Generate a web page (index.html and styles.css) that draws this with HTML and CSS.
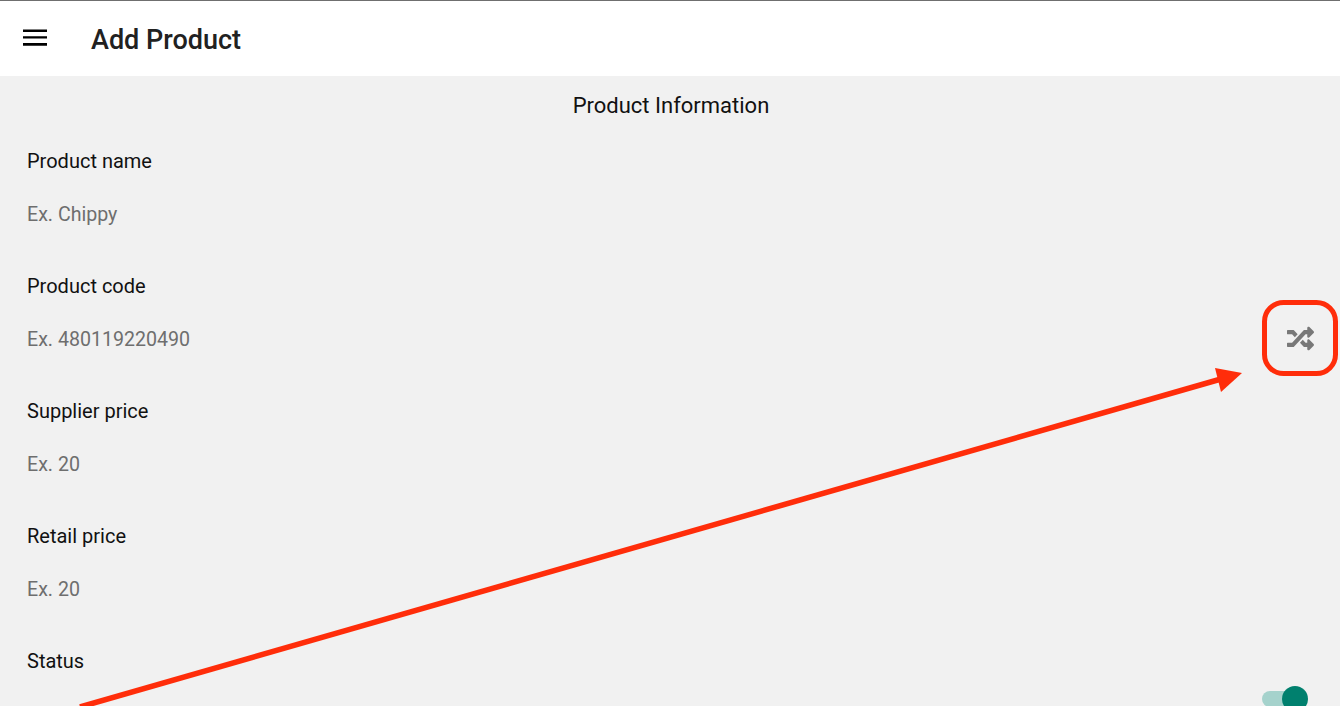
FILE: index.html
```html
<!DOCTYPE html>
<html lang="en">
<head>
<meta charset="utf-8">
<title>Add Product</title>
<link rel="stylesheet" href="styles.css">
</head>
<body>
<div class="page">
  <header class="appbar">
    <svg class="menu" viewBox="0 0 24 18" width="24" height="18"><path d="M0 0.5h24v2.6H0zM0 7.2h24v2.4H0zM0 14h24v2.8H0z"/></svg>
    <h1 class="title">Add Product</h1>
  </header>
  <main class="content">
    <h2 class="heading">Product Information</h2>
    <div class="field">
      <div class="label">Product name</div>
      <div class="input"><span class="hint">Ex. Chippy</span></div>
    </div>
    <div class="field">
      <div class="label">Product code</div>
      <div class="input"><span class="hint">Ex. 480119220490</span>
        <svg class="shuffle" viewBox="0 0 512 512" width="27" height="27"><path d="M504.971 359.029c9.373 9.373 9.373 24.569 0 33.941l-80 79.984c-15.01 15.01-40.971 4.49-40.971-16.971V416h-58.785a12.004 12.004 0 0 1-8.773-3.812l-70.556-75.596 53.333-57.143L352 336h32v-39.981c0-21.438 25.943-31.998 40.971-16.971l80 79.981zM12 176h84l52.781 56.551 53.333-57.143-70.556-75.596A11.999 11.999 0 0 0 122.785 96H12c-6.627 0-12 5.373-12 12v56c0 6.627 5.373 12 12 12zm372 0v39.984c0 21.46 25.961 31.98 40.971 16.971l80-79.984c9.373-9.373 9.373-24.569 0-33.941l-80-79.981C409.943 24.021 384 34.582 384 56.019V96h-58.785a12.004 12.004 0 0 0-8.773 3.812L96 336H12c-6.627 0-12 5.373-12 12v56c0 6.627 5.373 12 12 12h110.785c3.326 0 6.503-1.381 8.773-3.812L352 176h32z"/></svg>
      </div>
    </div>
    <div class="field">
      <div class="label">Supplier price</div>
      <div class="input"><span class="hint">Ex. 20</span></div>
    </div>
    <div class="field">
      <div class="label">Retail price</div>
      <div class="input"><span class="hint">Ex. 20</span></div>
    </div>
    <div class="field">
      <div class="label">Status</div>
      <div class="input status"><span class="switch"><span class="thumb"></span></span></div>
    </div>
  </main>
  <svg class="annotation" viewBox="0 0 1340 706" width="1340" height="706">
    <rect class="ring" x="1264.5" y="302.5" width="71" height="71" rx="19"/>
    <path class="shaft" d="M80 707L1228 377"/>
    <path class="head" d="M1215 368L1242 373L1221 392Z"/>
  </svg>
</div>
</body>
</html>
```
FILE: styles.css
```css
* { box-sizing: border-box; }
html, body { margin: 0; padding: 0; }
body { font-family: Roboto, "Liberation Sans", sans-serif; background: #f1f1f1; }
.page { position: relative; width: 1340px; height: 706px; overflow: hidden; }
.appbar { display: flex; align-items: center; height: 76px; padding-left: 23px; background: #fff; border-top: 1px solid #6f6f6f; }
.menu { fill: #000; flex: none; margin-top: -1px; }
.title { margin: 3px 0 0 44px; font-size: 27px; font-weight: 500; color: #212121; }
.content { padding: 15px 0 0 27px; }
.heading { margin: 0; height: 30px; line-height: 30px; padding-right: 25px; text-align: center; font-size: 22px; font-weight: 400; color: #111; }
.field { height: 125px; padding-top: 28px; }
.label { height: 24px; line-height: 24px; font-size: 20px; color: #111; }
.input { display: flex; align-items: center; justify-content: space-between; height: 30px; margin-top: 26px; padding-right: 26px; }
.hint { font-size: 19.6px; color: #6e6e6e; }
.shuffle { fill: #787878; flex: none; margin-bottom: 2px; }
.status { height: 26px; margin-top: 13px; padding-right: 0; justify-content: flex-end; }
.switch { position: relative; display: block; width: 34px; height: 16px; margin-right: 44px; border-radius: 8px; background: #a5d2cc; }
.thumb { position: absolute; top: -5px; right: -12px; width: 26px; height: 26px; border-radius: 50%; background: #00806e; }
.annotation { position: absolute; left: 0; top: 0; pointer-events: none; }
.ring { fill: none; stroke: #ff2d0a; stroke-width: 5; }
.shaft { fill: none; stroke: #ff2d0a; stroke-width: 5.5; }
.head { fill: #ff2d0a; }
```
